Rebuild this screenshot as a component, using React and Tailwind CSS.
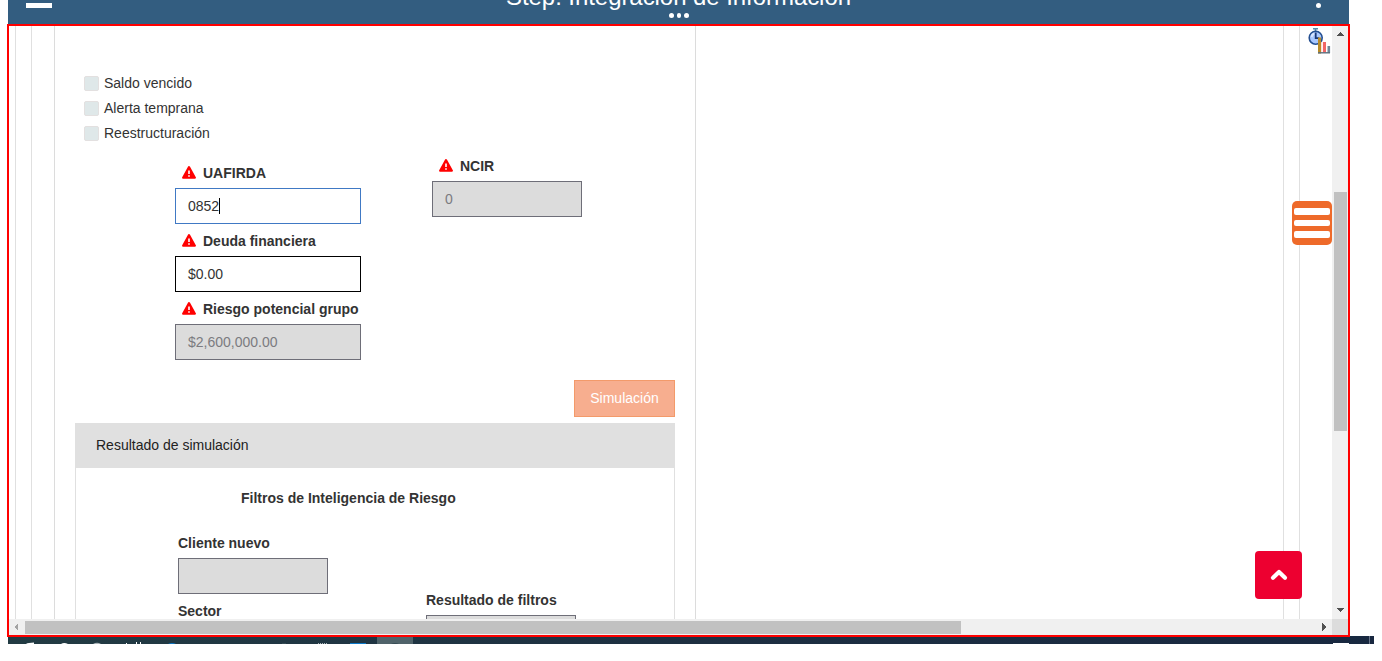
const checks = ['Saldo vencido', 'Alerta temprana', 'Reestructuración'];

function Warning() {
  return (
    <svg viewBox="0 0 14 13" className="-mt-[2px] h-[13px] w-[14px] shrink-0">
      <path d="M7 1.1 L12.9 11.7 H1.1 Z" fill="#f00" stroke="#f00" strokeWidth="2.1" strokeLinejoin="round" />
      <path d="M6.2 4.4h1.6v3.6H6.2zM6.2 9.2h1.6v1.6H6.2z" fill="#fff" />
    </svg>
  );
}

function Field({ label, value, warn, caret, labelClass = '', boxClass }) {
  return (
    <div className="flex flex-col">
      <div className={`flex h-8 items-center gap-[7px] whitespace-nowrap pt-[2px] font-bold text-[#333] ${labelClass}`}>
        {warn && <Warning />}
        <span>{label}</span>
      </div>
      <div className={`flex h-9 items-center border px-3 ${boxClass}`}>
        <span>{value}</span>
        {caret && <span className="h-4 w-px bg-black" />}
      </div>
    </div>
  );
}

const disabledBox = 'border-[#6e6e78] bg-[#dcdcdc] text-[#7b7b80]';

function Arrow({ points, color }) {
  return (
    <svg viewBox="0 0 16 16" className="size-4 shrink-0" shapeRendering="crispEdges">
      <polygon points={points} fill={color} />
    </svg>
  );
}

function StopwatchChart() {
  return (
    <svg viewBox="0 0 24 28" className="h-7 w-6">
      <path d="M5 0.6h5M7.5 0.5v3" stroke="#568ba8" strokeWidth="1.6" />
      <circle cx="7.7" cy="9.8" r="6.5" fill="#a9c8ff" stroke="#244f91" strokeWidth="1.6" />
      <path d="M3.5 9a4.5 4.5 0 0 1 3-3.5" fill="none" stroke="#d8e6ff" strokeWidth="2" />
      <path d="M7.7 4.5v5.6h3.5" fill="none" stroke="#193878" strokeWidth="1.8" />
      <path d="M10 9.5h3v16h-3z" fill="#b98b28" />
      <path d="M15 14h3v10.5h-3z" fill="#f26666" />
      <path d="M13.3 14h1v10.5h-1z" fill="#fbd0d0" />
      <path d="M19.5 18h2.6v7h-2.6z" fill="#6f8797" />
      <path d="M10 24.8h12" stroke="#5b6f7d" strokeWidth="1.4" />
    </svg>
  );
}

function Taskbar() {
  return (
    <div className="ml-2 h-2 w-[1366px] overflow-hidden bg-linear-to-r from-[#223b43] via-[#1d2f41] to-[#182840]">
      <svg viewBox="0 0 1366 8" className="h-2 w-full">
        <path d="M369 0h36v8h-36z" fill="#50636a" />
        <path d="M18 8q2-1.5 8-1.5v1.5zM53 8q3-2 7 0z" fill="#fff" />
        <path d="M85 8q4-2.5 8 0z" fill="#aab4b8" />
        <path d="M118 7h1v1h-1zM128 6h1v2h-1zM132 6h1v2h-1z" fill="#fff" />
        <path d="M160 8q4-2 8 0zM342 7h16v1h-16z" fill="#0a78c8" />
        <path d="M310 7h1v1h-1zM312 7h1v1h-1zM314 7h1v1h-1zM316 7h1v1h-1zM318 7h1v1h-1z" fill="#a9b4b8" />
        <path d="M383 8q4-2 8 0zM274 7h4v1h-4z" fill="#354b54" />
        <path d="M1325 7h16v1h-16z" fill="#fff" />
        <path d="M1361 0h1v8h-1z" fill="#69758a" />
      </svg>
    </div>
  );
}

export default function App() {
  return (
    <div className="relative h-[661px] w-[1382px] overflow-hidden bg-white font-['Liberation_Sans',Arial,sans-serif] text-sm leading-5 text-[#333]">
      <header className="relative ml-2 h-6 w-[1341px] overflow-hidden bg-[#335d80] text-white">
        <div className="absolute left-[18px] top-[3px] h-[5px] w-[26px] bg-white" />
        <h1 className="absolute left-[498px] top-[-19px] whitespace-nowrap text-2xl leading-8 tracking-[-0.06px]">Step: Integración de Información</h1>
        <div className="absolute left-[661px] top-[13px] flex gap-[3px]">
          <i className="size-[4.5px] rounded-full bg-white" />
          <i className="size-[4.5px] rounded-full bg-white" />
          <i className="size-[4.5px] rounded-full bg-white" />
        </div>
        <div className="absolute left-[1308px] top-[3px] size-[5px] rounded-full bg-white" />
      </header>

      <main className="relative z-10 ml-[7px] flex h-[613px] w-[1343px] flex-col border-2 border-[#f00] bg-white">
        <div className="flex h-[593px]">
          <div className="h-full w-[1323px] overflow-hidden pl-[6px]">
            <div className="h-full w-[1285px] border-x border-[#e0e0e0] px-[15px]">
              <div className="h-full border-x border-[#e0e0e0] pl-[22px]">
                <section className="flex h-full w-[642px] flex-col border-x border-[#dcdcdc] px-5 pt-[45px]">
                  <div className="flex flex-col pl-[9px]">
                    {checks.map((c) => (
                      <label key={c} className="flex h-[25px] items-center gap-[5px]">
                        <span className="size-[15px] rounded-[2px] border border-[#e3e0e0] bg-[#dfe8e9]" />
                        <span className="pb-[2px]">{c}</span>
                      </label>
                    ))}
                  </div>
                  <div className="flex h-[234px] shrink-0 items-start gap-[71px] pl-[100px] pt-[3px]">
                    <div className="w-[186px] pt-[7px]">
                      <Field warn label="UAFIRDA" value="0852" caret labelClass="pl-[7px]" boxClass="border-[#4079c4] text-[#333]" />
                      <Field warn label="Deuda financiera" value="$0.00" labelClass="pl-[7px]" boxClass="border-black text-[#333]" />
                      <Field warn label="Riesgo potencial grupo" value="$2,600,000.00" labelClass="pl-[7px]" boxClass={disabledBox} />
                    </div>
                    <div className="w-[150px]">
                      <Field warn label="NCIR" value="0" labelClass="pl-[7px]" boxClass={disabledBox} />
                    </div>
                  </div>
                  <button className="h-[37px] w-[101px] shrink-0 self-end border border-[#f39a6a] bg-[#f7ae8f] pb-[2px] text-white">Simulación</button>
                  <div className="mt-[6px] flex h-[196px] shrink-0 flex-col border-x border-[#e0e0e0]">
                    <div className="-mx-px flex h-[45px] shrink-0 items-center bg-[#e0e0e0] pb-[2px] pl-[21px] text-[#222]">Resultado de simulación</div>
                    <h2 className="pl-[165px] pt-5 font-bold">Filtros de Inteligencia de Riesgo</h2>
                    <div className="flex items-start gap-[98px] pl-[102px] pt-[18px]">
                      <div className="w-[150px]">
                        <Field label="Cliente nuevo" boxClass={disabledBox} />
                        <Field label="Sector" boxClass={disabledBox} />
                      </div>
                      <div className="w-[150px] pt-[57px]">
                        <Field label="Resultado de filtros" boxClass={disabledBox} />
                      </div>
                    </div>
                  </div>
                </section>
              </div>
            </div>
          </div>
          <div className="flex w-4 flex-col bg-[#f0f0f0]">
            <Arrow points="4,10 12,10 8,6" color="#505050" />
            <div className="ml-[2px] mt-[150px] h-[239px] w-[13px] shrink-0 bg-[#c1c1c1]" />
            <div className="flex-1" />
            <Arrow points="4,5 12,5 8,9" color="#505050" />
          </div>
        </div>
        <div className="flex h-4">
          <div className="flex w-[1323px] items-center bg-[#f0f0f0]">
            <Arrow points="9,4 9,12 5,8" color="#a3a3a3" />
            <div className="h-[13px] w-[936px] bg-[#c1c1c1]" />
            <div className="flex-1" />
            <Arrow points="6,4 6,12 10,8" color="#505050" />
          </div>
          <div className="w-4 bg-[#dcdcdc]" />
        </div>

        <div className="absolute left-[1299px] top-[2px]"><StopwatchChart /></div>
        <div className="absolute left-[1283px] top-[175px] flex h-11 w-10 flex-col gap-[5px] rounded-[5px] bg-[#ee6a2a] px-[2px] pt-[7px]">
          <span className="h-[6.5px] rounded-[2px] bg-white" />
          <span className="h-[6.5px] rounded-[2px] bg-white" />
          <span className="h-[6.5px] rounded-[2px] bg-white" />
        </div>
        <div className="absolute left-[1246px] top-[525px] flex h-12 w-[47px] items-center justify-center rounded bg-[#ed0030]">
          <svg viewBox="0 0 18 12" className="h-3 w-[18px]">
            <path d="M3 8.7 L9 3 L15 8.7" fill="none" stroke="#fff" strokeWidth="4.2" strokeLinecap="round" strokeLinejoin="round" />
          </svg>
        </div>
      </main>
      <div className="-mt-px"><Taskbar /></div>
    </div>
  );
}
